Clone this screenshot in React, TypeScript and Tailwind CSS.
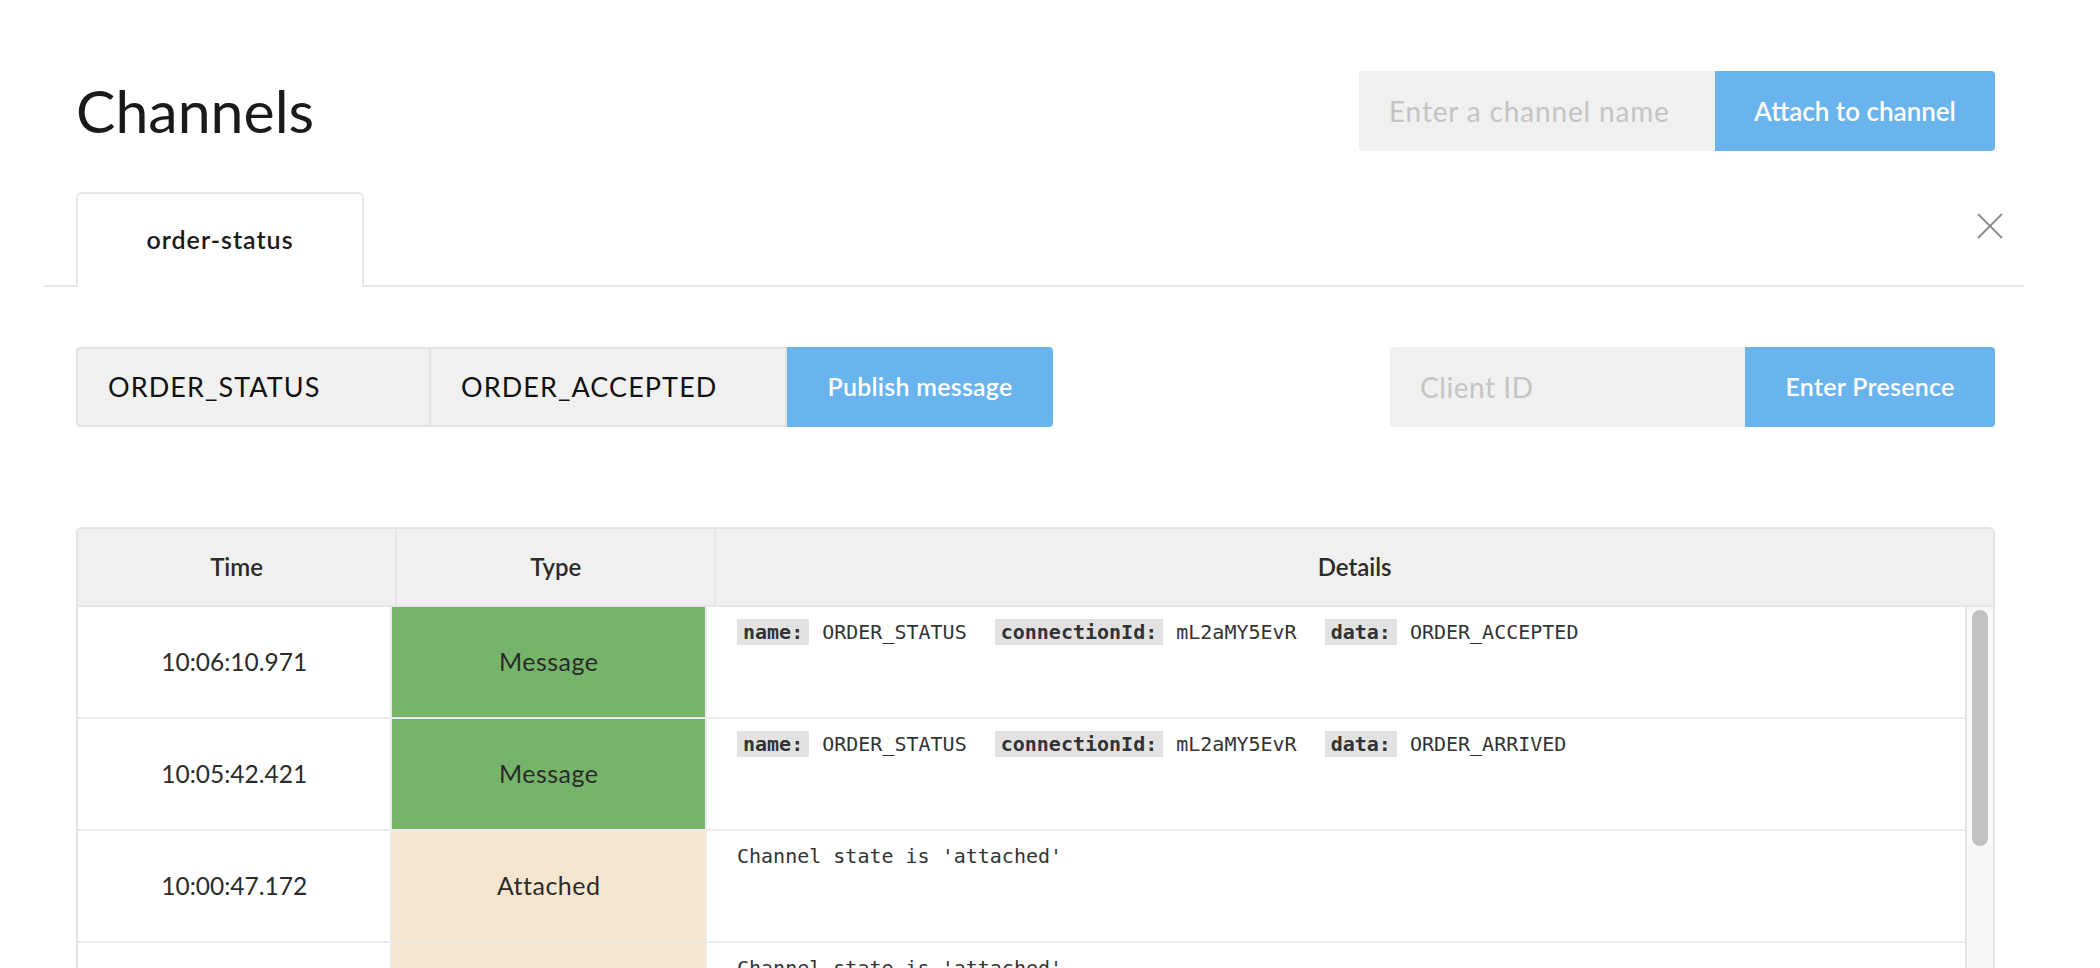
import React from "react";

interface LogRow {
  time: string;
  type: "Message" | "Attached";
  fields?: [string, string][];
  text?: string;
}

const rows: LogRow[] = [
  {
    time: "10:06:10.971",
    type: "Message",
    fields: [
      ["name:", "ORDER_STATUS"],
      ["connectionId:", "mL2aMY5EvR"],
      ["data:", "ORDER_ACCEPTED"],
    ],
  },
  {
    time: "10:05:42.421",
    type: "Message",
    fields: [
      ["name:", "ORDER_STATUS"],
      ["connectionId:", "mL2aMY5EvR"],
      ["data:", "ORDER_ARRIVED"],
    ],
  },
  { time: "10:00:47.172", type: "Attached", text: "Channel state is 'attached'" },
  { time: "09:58:12.004", type: "Attached", text: "Channel state is 'attached'" },
  { time: "09:55:31.610", type: "Attached", text: "Channel state is 'attached'" },
];

const sans = { fontFamily: "Lato, 'Open Sans', sans-serif" };

const Details = ({ row }: { row: LogRow }) => {
  if (row.text) return <span>{row.text}</span>;
  return (
    <div className="flex">
      {row.fields?.map(([label, value]) => (
        <div key={label} className="flex mr-[28px]">
          <span className="bg-[#e2e2e2] px-[6px] font-bold text-[#333]">{label}</span>
          <span className="ml-[13px]">{value}</span>
        </div>
      ))}
    </div>
  );
};

const App = () => {
  return (
    <div className="h-[968px] w-full overflow-hidden bg-white text-[#1c1c1c]" style={sans}>
      <div className="ml-[76px] w-[1919px] pt-[71px]">
        {/* header */}
        <div className="flex h-[80px] items-center justify-between">
          <h1 className="text-[59px] font-normal leading-none text-[#1a1a1a] -mt-[2px]">Channels</h1>
          <div className="flex h-[80px] w-[636px]">
            <div className="flex flex-1 items-center rounded-l-[4px] bg-[#f0f0f0] pl-[30px] text-[28px] tracking-[0.03em] text-[#c4c4c4]">
              Enter a channel name
            </div>
            <button className="w-[280px] rounded-r-[4px] bg-[#6ab4ee] text-[26px] font-semibold text-white">
              Attach to channel
            </button>
          </div>
        </div>

        {/* tabs */}
        <div className="-ml-[32px] -mr-[29px] mt-[41px] flex items-start justify-between border-b-2 border-[#e8e8e8] pl-[32px] pr-[21px]">
          <div className="-mb-[2px] flex h-[95px] w-[288px] items-center justify-center rounded-t-[6px] border-2 border-b-0 border-[#e8e8e8] bg-white pb-[2px] text-[25px] font-semibold tracking-[0.04em] text-[#1a1a1a]">
            order-status
          </div>
          <svg width="26" height="26" viewBox="0 0 26 26" className="mt-[21px]">
            <line x1="1" y1="1" x2="25" y2="25" stroke="#8a8a8a" strokeWidth="1.8" />
            <line x1="25" y1="1" x2="1" y2="25" stroke="#8a8a8a" strokeWidth="1.8" />
          </svg>
        </div>

        {/* publish + presence */}
        <div className="mt-[60px] flex h-[80px] justify-between">
          <div className="flex">
            <div className="flex w-[355px] items-center rounded-l-[4px] border-2 border-[#e2e2e2] bg-[#f0f0f0] pl-[30px] text-[27px] tracking-[0.04em] text-[#111]">
              ORDER_STATUS
            </div>
            <div className="flex w-[356px] items-center border-2 border-l-0 border-[#e2e2e2] bg-[#f0f0f0] pl-[30px] text-[27px] tracking-[0.04em] text-[#111]">
              ORDER_ACCEPTED
            </div>
            <button className="w-[266px] rounded-r-[4px] bg-[#6ab4ee] text-[25px] font-semibold tracking-[0.01em] text-white">
              Publish message
            </button>
          </div>
          <div className="flex w-[605px]">
            <div className="flex flex-1 items-center rounded-l-[4px] bg-[#f0f0f0] pl-[30px] text-[28px] tracking-[0.02em] text-[#c4c4c4]">
              Client ID
            </div>
            <button className="w-[250px] rounded-r-[4px] bg-[#6ab4ee] text-[25px] font-semibold tracking-[0.01em] text-white">
              Enter Presence
            </button>
          </div>
        </div>

        {/* log table */}
        <div className="mt-[100px] rounded-t-[6px] border-2 border-[#e3e3e3]">
          <div className="flex h-[78px] border-b-2 border-[#e6e6e6] bg-[#f0f0f0] text-[24px] font-semibold text-[#2b2b2b]">
            <div className="flex w-1/6 items-center justify-center border-r-2 border-[#e6e6e6]">Time</div>
            <div className="flex w-1/6 items-center justify-center border-r-2 border-[#e6e6e6]">Type</div>
            <div className="flex flex-1 items-center justify-center">Details</div>
          </div>
          <div className="flex h-[700px]">
            <div className="flex-1">
              {rows.map((row) => (
                <div key={row.time} className="flex h-[112px] border-b-2 border-[#ebebeb]">
                  <div className="flex w-1/6 items-center justify-center border-r-2 border-[#ebebeb] text-[24.5px] text-[#2b2b2b]">
                    {row.time}
                  </div>
                  <div
                    className={
                      row.type === "Message"
                        ? "flex w-1/6 items-center justify-center border-r-2 border-[#ebebeb] bg-[#75b46a] text-[25px] tracking-[0.02em] text-[#2b2b2b]"
                        : "flex w-1/6 items-center justify-center border-r-2 border-[#ebebeb] bg-[#f6e6d0] text-[25px] tracking-[0.02em] text-[#2b2b2b]"
                    }
                  >
                    {row.type}
                  </div>
                  <div
                    className="flex-1 pl-[30px] pt-[12px] text-[20px] leading-[26px] text-[#333]"
                    style={{ fontFamily: "'DejaVu Sans Mono', monospace" }}
                  >
                    <Details row={row} />
                  </div>
                </div>
              ))}
            </div>
            <div className="w-[28px] border-l-2 border-[#e6e6e6] bg-[#f8f8f8] pt-[3px]">
              <div className="mx-auto h-[236px] w-[16px] rounded-full bg-[#c1c1c1]" />
            </div>
          </div>
        </div>
      </div>
    </div>
  );
};

export default App;
